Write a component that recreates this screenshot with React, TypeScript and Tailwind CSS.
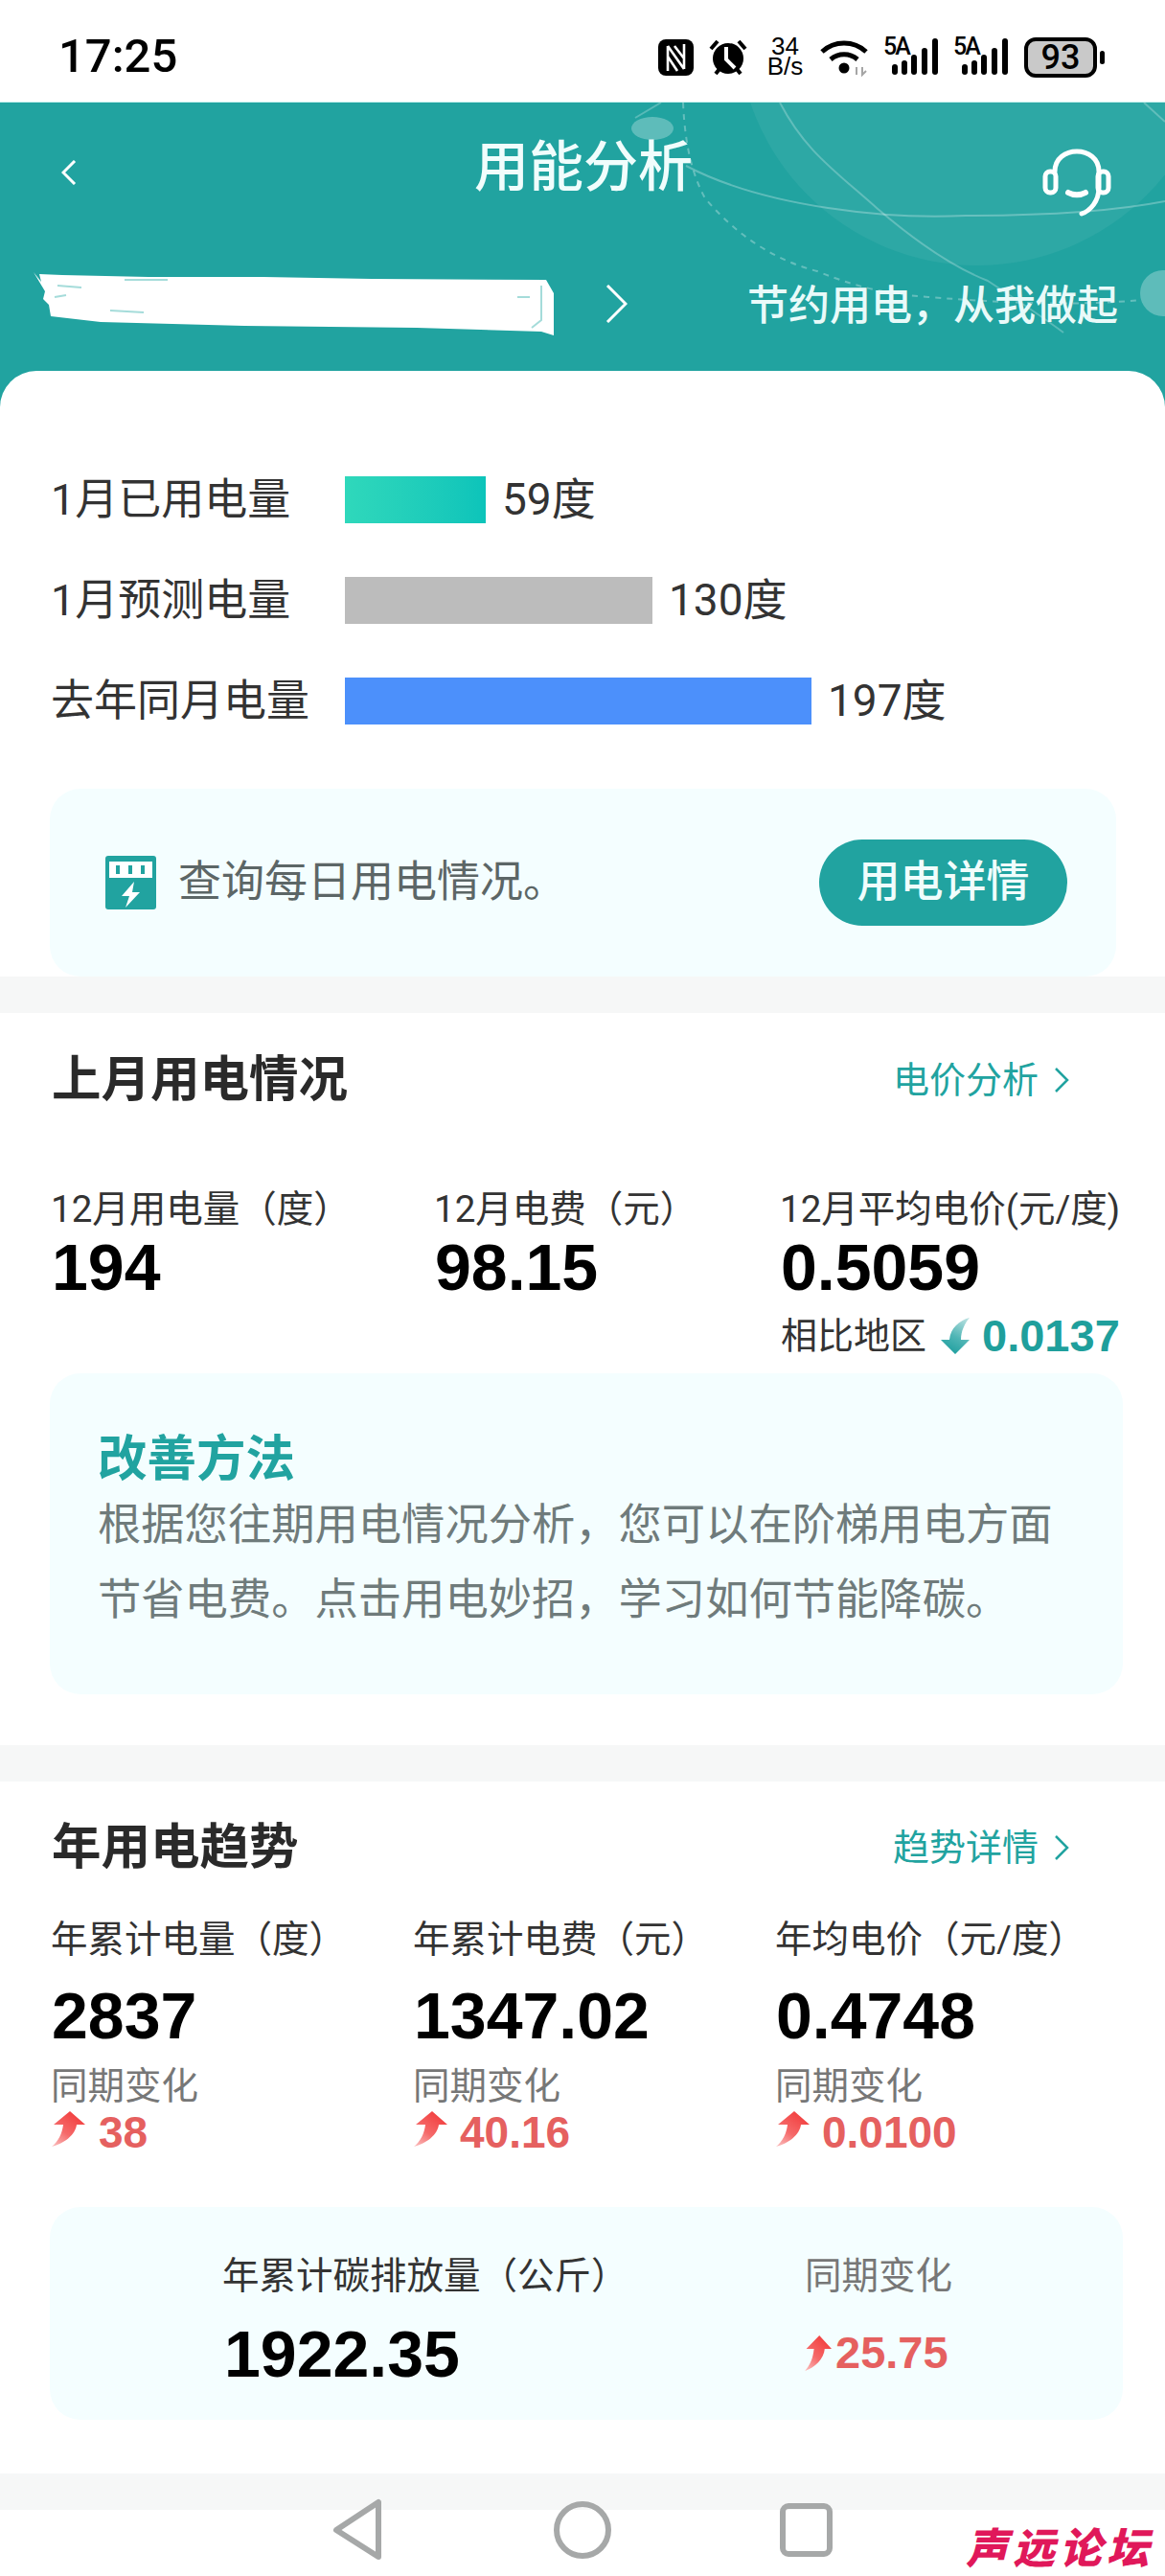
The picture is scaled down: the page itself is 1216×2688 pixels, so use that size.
import React from "react";

const Up = ({ id, w = 35, h = 37 }: { id: string; w?: number; h?: number }) => (
  <svg width={w} height={h} viewBox="0 0 35 37" preserveAspectRatio="none" className="shrink-0">
    <defs>
      <linearGradient id={id} x1="0.7" y1="0" x2="0" y2="1">
        <stop offset="0" stopColor="#f23d3d" />
        <stop offset="0.55" stopColor="#f56a6a" />
        <stop offset="1" stopColor="#fbc4c4" />
      </linearGradient>
    </defs>
    <path d="M19 0 L35 14 L26 14 C25 24 13 34 0 37 C7 31 11 23 12 14 L2 14 Z" fill={`url(#${id})`} />
  </svg>
);

const Down = () => (
  <svg width="30" height="38" viewBox="0 0 30 38">
    <defs>
      <linearGradient id="dn" x1="0.8" y1="0" x2="0.4" y2="1">
        <stop offset="0" stopColor="#b5dfdf" />
        <stop offset="0.55" stopColor="#4fb5b5" />
        <stop offset="1" stopColor="#1f9f9f" />
      </linearGradient>
    </defs>
    <path d="M30 0 C19 3 10 11 9 23 L0 23 L15 38 L30 23 L21 23 C21 14 25 6 30 0 Z" fill="url(#dn)" />
  </svg>
);

const Chev = ({ w, h, cls, sw = 2.5 }: { w: number; h: number; cls: string; sw?: number }) => (
  <svg width={w} height={h} viewBox={`0 0 ${w} ${h}`} className={cls} fill="none" stroke="currentColor" strokeWidth={sw}>
    <path d={`M2 1 L${w - 2} ${h / 2} L2 ${h - 1}`} />
  </svg>
);

const Signal = () => (
  <div className="relative w-[58px] h-[38px]">
    <span className="absolute left-0 top-[-4px] text-[25px] leading-[26px] tracking-[-2px] font-medium [font-family:Roboto,sans-serif] text-black">5A</span>
    <svg width="58" height="38" viewBox="0 0 58 38" className="absolute left-0 top-0">
      <rect x="9" y="27" width="6" height="11" rx="3" />
      <rect x="19" y="23" width="6" height="15" rx="3" />
      <rect x="29" y="17" width="6" height="21" rx="3" />
      <rect x="40" y="10" width="6" height="28" rx="3" />
      <rect x="51" y="0" width="6" height="38" rx="3" />
    </svg>
  </div>
);

const StatusBar = () => (
  <div className="h-[106px] flex pt-[38px] pl-[61px] pr-[63px] justify-between items-start bg-white">
    <span className="text-[49px] leading-[42px] font-medium text-black [font-family:Roboto,sans-serif]">17:25</span>
    <div className="flex items-start text-black">
      <svg width="37" height="38" viewBox="0 0 37 38" className="mt-[3px]">
        <rect x="0" y="0" width="37" height="38" rx="8" />
        <path d="M10 7 L10 33 M10 7 L27 31 M17 7 L27 20 M27 5 L27 31 M10 18 L20 33" stroke="#fff" strokeWidth="2.6" fill="none" />
      </svg>
      <svg width="40" height="40" viewBox="0 0 40 40" className="ml-[16px] mt-[2px]">
        <circle cx="20" cy="21" r="16" />
        <path d="M2 11 L9 3 M38 11 L31 3 M7 37 L11 32 M33 37 L29 32" stroke="#000" strokeWidth="4" fill="none" />
        <path d="M18 9 L18 22 L27 31" stroke="#fff" strokeWidth="4" fill="none" />
      </svg>
      <div className="ml-[20px] w-[39px] text-center [font-family:'Liberation_Sans',sans-serif] text-[26px] leading-[21px] whitespace-nowrap">
        34
        <br />
        B/s
      </div>
      <svg width="53" height="40" viewBox="0 0 53 40" className="ml-[17px] mt-[2px]" fill="none" stroke="#000" strokeWidth="5">
        <path d="M2 14 C15 2 35 2 48 14" />
        <path d="M11 22 C19 15 31 15 39 22" />
        <circle cx="25" cy="31" r="5.5" fill="#000" stroke="none" />
        <path d="M38 30 L38 38 M44 30 L44 38 L48 34" stroke="#a5a5a5" strokeWidth="2" />
      </svg>
      <div className="ml-[13px] mt-[2px]"><Signal /></div>
      <div className="ml-[15px] mt-[2px]"><Signal /></div>
      <div className="ml-[16px] mt-[1px] flex items-center">
        <div className="w-[76px] h-[42px] rounded-[12px] border-[4px] border-black bg-[#c9c9c9] flex items-center justify-center text-[36px] leading-none font-medium [font-family:Roboto,sans-serif]">93</div>
        <div className="ml-[3px] w-[5px] h-[14px] rounded-[3px] bg-black" />
      </div>
    </div>
  </div>
);

const Decor = () => (
  <svg width="1216" height="320" viewBox="0 0 1216 320" className="absolute left-0 top-0" fill="none">
    <circle cx="1020" cy="-80" r="250" fill="#ffffff" fillOpacity="0.055" />
    <ellipse cx="681" cy="27" rx="22" ry="12" fill="#ffffff" fillOpacity="0.28" />
    <circle cx="1214" cy="199" r="24" fill="#ffffff" fillOpacity="0.28" />
    <path d="M663 16 L690 0" stroke="#ffffff" strokeOpacity="0.25" strokeWidth="2" />
    <path d="M716 66 C800 110 930 122 1008 118 C1100 118 1170 112 1216 103" stroke="#ffffff" strokeOpacity="0.28" strokeWidth="2" />
    <path d="M814 0 C840 50 870 70 915 110 C950 140 990 170 1031 186 C1060 205 1090 225 1110 240" stroke="#ffffff" strokeOpacity="0.25" strokeWidth="2" />
    <path d="M713 0 C715 50 725 80 736 100 C770 140 810 165 853 176 C900 195 930 200 969 203 C1060 210 1130 212 1190 206" stroke="#ffffff" strokeOpacity="0.3" strokeWidth="2" strokeDasharray="6 6" />
    <path d="M1194 0 L1216 20" stroke="#ffffff" strokeOpacity="0.25" strokeWidth="2" />
  </svg>
);

const Header = () => (
  <div className="relative h-[320px] bg-[#21a3a0] border-t border-[#c8f2f0] text-white overflow-hidden">
    <Decor />
    <div className="relative grid grid-cols-[1fr_auto_1fr] items-center h-[100px] mt-[17px] px-[56px]">
      <Chev w={16} h={26} sw={3} cls="rotate-180 mt-[10px] ml-[8px]" />
      <span className="ml-[2px] text-[57px] leading-[70px] text-[#f0fdfc] font-medium">用能分析</span>
      <div className="flex justify-end mt-[30px]">
        <svg width="72" height="72" viewBox="0 0 72 72" fill="none" stroke="#fff" strokeWidth="5" strokeLinecap="round">
          <path d="M13 25 C13 -3 59 -3 59 25 L59 42 C59 56 50 66 41 69" />
          <rect x="3" y="25" width="11" height="22" rx="5" />
          <rect x="58" y="25" width="11" height="22" rx="5" />
          <path d="M27 47 C32 50 40 50 45 47" strokeWidth="6" />
        </svg>
      </div>
    </div>
    <div className="relative flex items-center mt-[60px] h-[65px] pl-[35px]">
      <svg width="543" height="66" viewBox="0 0 543 66" className="shrink-0">
        <path d="M0 0 L8 10 L6 2 L30 3 L120 5 L240 5 L353 7 L535 8 L543 22 L543 66 L530 62 L400 58 L220 56 L70 52 L18 46 L16 34 L10 28 L12 20 Z" fill="#fff" />
        <path d="M25 14 L50 16 M22 26 L34 24 M80 40 L115 42 M95 8 L140 8 M505 26 L518 26 M530 14 L530 50 L520 58" stroke="#a5dcda" strokeWidth="2" fill="none" />
      </svg>
      <Chev w={23} h={40} sw={3} cls="ml-[54px] shrink-0" />
      <span className="ml-auto mr-[49px] mt-[5px] text-[43px] leading-[50px] font-medium text-[#e9faf9] whitespace-nowrap">节约用电，从我做起</span>
    </div>
  </div>
);

const bars = [
  { l: "1月已用电量", c: "w-[147px] bg-gradient-to-r from-[#2fd8bb] to-[#0cc4ba]", v: "59度" },
  { l: "1月预测电量", c: "w-[321px] bg-[#bcbcbc]", v: "130度" },
  { l: "去年同月电量", c: "w-[487px] bg-[#4c90fb]", v: "197度" },
];

const Gap = () => <div className="h-[38px] bg-[#f6f7f7] shrink-0" />;

const SectionHead = ({ t, l }: { t: string; l: string }) => (
  <div className="flex items-center justify-between pl-[2px] pr-[100px] h-[60px]">
    <span className="text-[51.5px] leading-[60px] font-bold text-[#2a2a2a]">{t}</span>
    <span className="flex items-center text-[38px] leading-[44px] text-[#21a3a0]">
      {l}
      <Chev w={16} h={26} sw={2.5} cls="ml-[16px]" />
    </span>
  </div>
);

const Num = ({ c, children }: { c: string; children: React.ReactNode }) => (
  <div className={`[font-family:'Liberation_Sans',sans-serif] font-bold text-black ${c}`}>{children}</div>
);

const last = [
  { l: "12月用电量（度）", v: "194" },
  { l: "12月电费（元）", v: "98.15" },
  { l: "12月平均电价(元/度)", v: "0.5059" },
];

const year = [
  { l: "年累计电量（度）", v: "2837", d: "38", x: "gap-[14px]" },
  { l: "年累计电费（元）", v: "1347.02", d: "40.16", x: "gap-[13px]" },
  { l: "年均电价（元/度）", v: "0.4748", d: "0.0100", x: "gap-[13px]" },
];

export default function App() {
  return (
    <div className="relative w-[1216px] h-[2688px] overflow-hidden bg-white [font-family:Roboto,'Noto_Sans_CJK_SC',sans-serif]">
      <StatusBar />
      <Header />

      <div className="relative -mt-[39px] h-[632px] rounded-t-[38px] bg-white pt-[110px] overflow-hidden">
        <div className="flex flex-col gap-[56px] pl-[53px]">
          {bars.map((b) => (
            <div key={b.l} className="flex items-center h-[49px] text-[45px] text-[#333]">
              <span className="w-[307px] leading-[49px] whitespace-nowrap">{b.l}</span>
              <div className={`h-[49px] ${b.c}`} />
              <span className="ml-[17px] leading-[49px] text-[46px]">{b.v}</span>
            </div>
          ))}
        </div>
        <div className="mt-[67px] ml-[52px] w-[1113px] h-[196px] rounded-[32px] bg-[#f4feff] flex items-center pl-[58px] pr-[51px]">
          <svg width="53" height="56" viewBox="0 0 53 56" className="shrink-0">
            <rect width="53" height="56" rx="3" fill="#21a3a0" />
            <rect x="4" y="6" width="45" height="17" fill="#fff" />
            <path d="M13 10 V19 M26 10 V19 M39 10 V19" stroke="#21a3a0" strokeWidth="4" />
            <path d="M30 27 L17 42 L25 42 L21 54 L36 38 L28 38 Z" fill="#fff" />
          </svg>
          <span className="ml-[23px] text-[45px] leading-[56px] text-[#5c6666] whitespace-nowrap">查询每日用电情况。</span>
          <span className="ml-auto w-[259px] h-[90px] rounded-full bg-[#21a3a0] text-[#f0fdfc] text-[45px] flex items-center justify-center font-medium">用电详情</span>
        </div>
      </div>

      <Gap />

      <div className="h-[764px] pl-[52px] pt-[40px]">
        <SectionHead t="上月用电情况" l="电价分析" />
        <div className="grid grid-cols-[400px_361px_1fr] mt-[83px] pl-[2px]">
          {last.map((c) => (
            <div key={c.l}>
              <div className="text-[38.5px] leading-[44px] text-[#333] whitespace-nowrap -ml-[1px]">{c.l}</div>
              <Num c="text-[68px] leading-[76px]">{c.v}</Num>
            </div>
          ))}
          <div className="col-start-3 mt-[12px] flex items-center h-[44px] whitespace-nowrap">
            <span className="text-[38px] leading-[44px] text-[#333]">相比地区</span>
            <span className="ml-[15px]"><Down /></span>
            <Num c="ml-[13px] text-[47px] leading-[44px] !text-[#1f9f9c]">0.0137</Num>
          </div>
        </div>
        <div className="mt-[17px] w-[1120px] h-[335px] rounded-[32px] bg-[#f4feff] pl-[50px] pt-[60px]">
          <div className="text-[51.5px] leading-[60px] font-bold text-[#21a3a0]">改善方法</div>
          <p className="text-[45.3px] leading-[78px] text-[#6f7b7b] whitespace-nowrap">
            根据您往期用电情况分析，您可以在阶梯用电方面
            <br />
            节省电费。点击用电妙招，学习如何节能降碳。
          </p>
        </div>
      </div>

      <Gap />

      <div className="h-[722px] pl-[52px] pt-[39px]">
        <SectionHead t="年用电趋势" l="趋势详情" />
        <div className="grid grid-cols-[378px_378px_1fr] mt-[44px] pl-[2px]">
          {year.map((c, i) => (
            <div key={c.l}>
              <div className="text-[38.5px] leading-[44px] text-[#333] whitespace-nowrap -ml-[1px]">{c.l}</div>
              <Num c="mt-[19px] text-[68px] leading-[76px]">{c.v}</Num>
              <div className="mt-[14px] text-[38.5px] leading-[44px] text-[#777] -ml-[1px]">同期变化</div>
              <div className={`flex items-start h-[44px] mt-[4px] ${c.x}`}>
                <Up id={`u${i}`} />
                <Num c="text-[46px] leading-[44px] !text-[#e5605f]">{c.d}</Num>
              </div>
            </div>
          ))}
        </div>
        <div className="mt-[56px] w-[1120px] h-[222px] rounded-[32px] bg-[#f4feff] flex pl-[180px] pt-[50px]">
          <div className="w-[608px]">
            <div className="text-[38.5px] leading-[44px] text-[#333] whitespace-nowrap">年累计碳排放量（公斤）</div>
            <Num c="mt-[21px] ml-[2px] text-[68px] leading-[76px]">1922.35</Num>
          </div>
          <div>
            <div className="text-[38.5px] leading-[44px] text-[#777]">同期变化</div>
            <div className="flex items-center mt-[36px] gap-[4px]">
              <Up id="u9" w={28} h={37} />
              <Num c="text-[47px] leading-[44px] !text-[#e5605f]">25.75</Num>
            </div>
          </div>
        </div>
      </div>

      <Gap />

      <div className="relative h-[69px] bg-white">
        <div className="absolute left-[347px] -top-[12px] flex items-center">
          <svg width="52" height="65" viewBox="0 0 52 65" fill="none" stroke="#a6a8a8" strokeWidth="6" strokeLinejoin="round">
            <path d="M48 4 L48 61 L4 33 Z" />
          </svg>
          <svg width="60" height="60" viewBox="0 0 60 60" fill="none" stroke="#a6a8a8" strokeWidth="6" className="ml-[179px]">
            <ellipse cx="30" cy="30" rx="27" ry="27" />
          </svg>
          <svg width="55" height="56" viewBox="0 0 55 56" fill="none" stroke="#a6a8a8" strokeWidth="6" className="ml-[176px]">
            <rect x="3" y="3" width="49" height="50" rx="6" />
          </svg>
        </div>
        <span className="absolute left-[1008px] top-[5px] text-[44px] leading-[64px] tracking-[5px] font-black italic text-[#e0185a] whitespace-nowrap [font-family:'Noto_Sans_CJK_SC',sans-serif]">声远论坛</span>
      </div>
    </div>
  );
}
